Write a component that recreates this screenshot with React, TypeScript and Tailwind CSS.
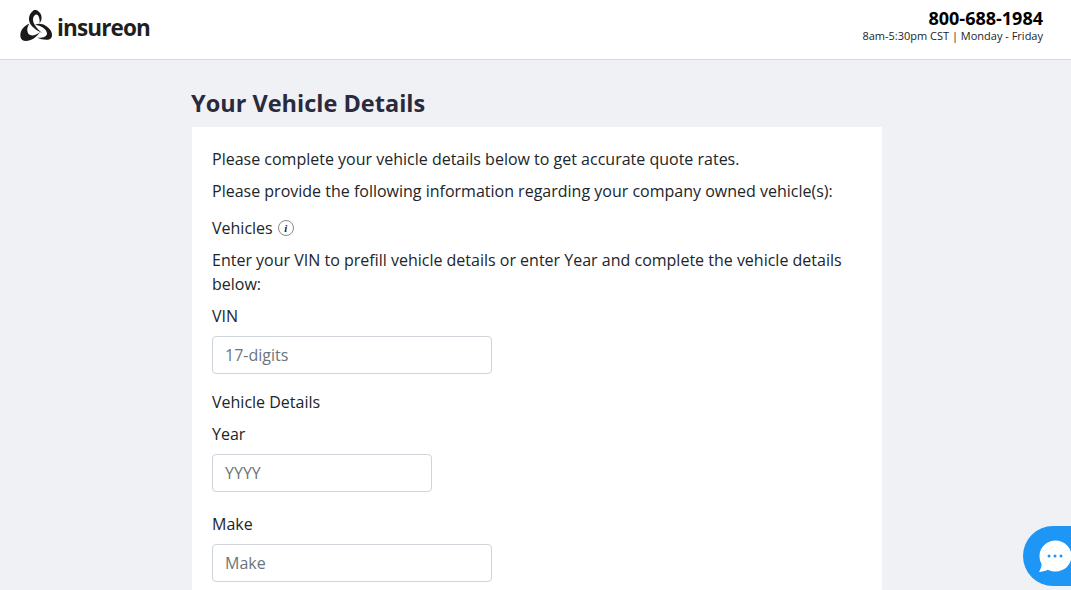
import React from "react";

const Label = ({ children, className = "" }: { children: React.ReactNode; className?: string }) => (
  <div className={`text-[16px] leading-[24px] text-[#212529] ${className}`}>{children}</div>
);

const Field = ({ placeholder, width, className = "" }: { placeholder: string; width: string; className?: string }) => (
  <input
    readOnly
    placeholder={placeholder}
    className={`block h-[38px] ${width} rounded-[4px] border border-[#ced4da] bg-white px-3 text-[16px] text-[#495057] placeholder:text-[#6c757d] outline-none ${className}`}
  />
);

const Logo = () => (
  <div className="flex items-start">
    <svg width="33" height="32" viewBox="0 0 33 32" className="shrink-0">
      <path d="M14 0 C9.500 3 8 8 9.500 12 C11 16.500 16 20 22 23 C17 18.500 13 14 13 9.500 C13 6.500 14.500 4.500 17 4.500 C19 6 20 9 19.500 13 C22.500 10 22.500 4 18 1 C16.500 0 15 -0.300 14 0 Z" fill="#1a1a1a" />
      <path d="M0.500 27 C-0.500 22 3 16 9.500 13.500 C7 17 6.500 21 8.500 24 C11 26.500 16 25.500 20 22 C17 27 11 31 6 31 C3 31 1 29.500 0.500 27 Z" fill="#1a1a1a" />
      <path d="M15 15 C20 12 27 15 31 21 C33 25 32 28.500 29 29.500 C26 30.200 21 29.500 17 27.500 C22 28.200 26.500 27 27 24 C27.300 20 22 15.500 15 15 Z" fill="#1a1a1a" />
    </svg>
    <span className="ml-[4px] mt-[3px] text-[22.5px] leading-[30px] font-bold tracking-[-0.85px] text-[#1f1f1f]">insureon</span>
  </div>
);

export default function App() {
  return (
    <div className="h-[590px] overflow-hidden bg-[#f0f1f5] font-['Open_Sans',sans-serif]">
      <header className="flex h-[60px] items-start justify-between border-b border-[#d8d9e0] bg-white pl-[20px] pr-[28px]">
        <div className="pt-[10px]"><Logo /></div>
        <div className="pt-[7px] text-right">
          <div className="text-[18px] leading-[22px] font-bold text-black">800-688-1984</div>
          <div className="text-[11px] leading-[14px] text-[#212529]">8am-5:30pm CST | Monday - Friday</div>
        </div>
      </header>
      <main className="ml-[192px] w-[690px]">
        <h1 className="-ml-[1px] pt-[27px] pb-[7px] text-[23.5px] leading-[33px] font-bold text-[#2a2a3c]">Your Vehicle Details</h1>
        <section className="bg-white px-[20px] pt-[20px] pb-[40px]">
          <Label>Please complete your vehicle details below to get accurate quote rates.</Label>
          <Label className="mt-[8px]">Please provide the following information regarding your company owned vehicle(s):</Label>
          <Label className="mt-[13px] flex items-center">
            Vehicles
            <span className="ml-[5px] flex h-[16px] w-[16px] items-center justify-center rounded-full border border-[#8a8a8a] font-['Liberation_Serif',serif] text-[11px] font-bold italic leading-none">i</span>
          </Label>
          <Label className="mt-[8px]">Enter your VIN to prefill vehicle details or enter Year and complete the vehicle details below:</Label>
          <Label className="mt-[8px]">VIN</Label>
          <Field placeholder="17-digits" width="w-[280px]" className="mt-[8px]" />
          <Label className="mt-[16px]">Vehicle Details</Label>
          <Label className="mt-[8px]">Year</Label>
          <Field placeholder="YYYY" width="w-[220px]" className="mt-[8px]" />
          <Label className="mt-[20px]">Make</Label>
          <Field placeholder="Make" width="w-[280px]" className="mt-[8px]" />
        </section>
      </main>
      <div className="fixed left-[1023px] top-[526px] flex h-[60px] w-[60px] items-center rounded-l-[30px] bg-[#1e96f5] pl-[16px]">
        <svg width="33" height="33" viewBox="0 0 33 33">
          <path d="M16.500 0.500 C25 0.500 32.500 7 32.500 16 C32.500 25 25 31.500 16.500 31.500 C13.500 31.500 11 30.800 8.800 29.700 C6 31 3 31.800 0 32 C1.500 29.500 2.500 27 2.600 24 C1.300 21.600 0.500 19 0.500 16 C0.500 7 8 0.500 16.500 0.500 Z" fill="#fff" />
          <circle cx="10" cy="16" r="1.500" fill="#1e96f5" />
          <circle cx="16" cy="16" r="1.500" fill="#1e96f5" />
          <circle cx="22" cy="16" r="1.500" fill="#1e96f5" />
        </svg>
      </div>
    </div>
  );
}
